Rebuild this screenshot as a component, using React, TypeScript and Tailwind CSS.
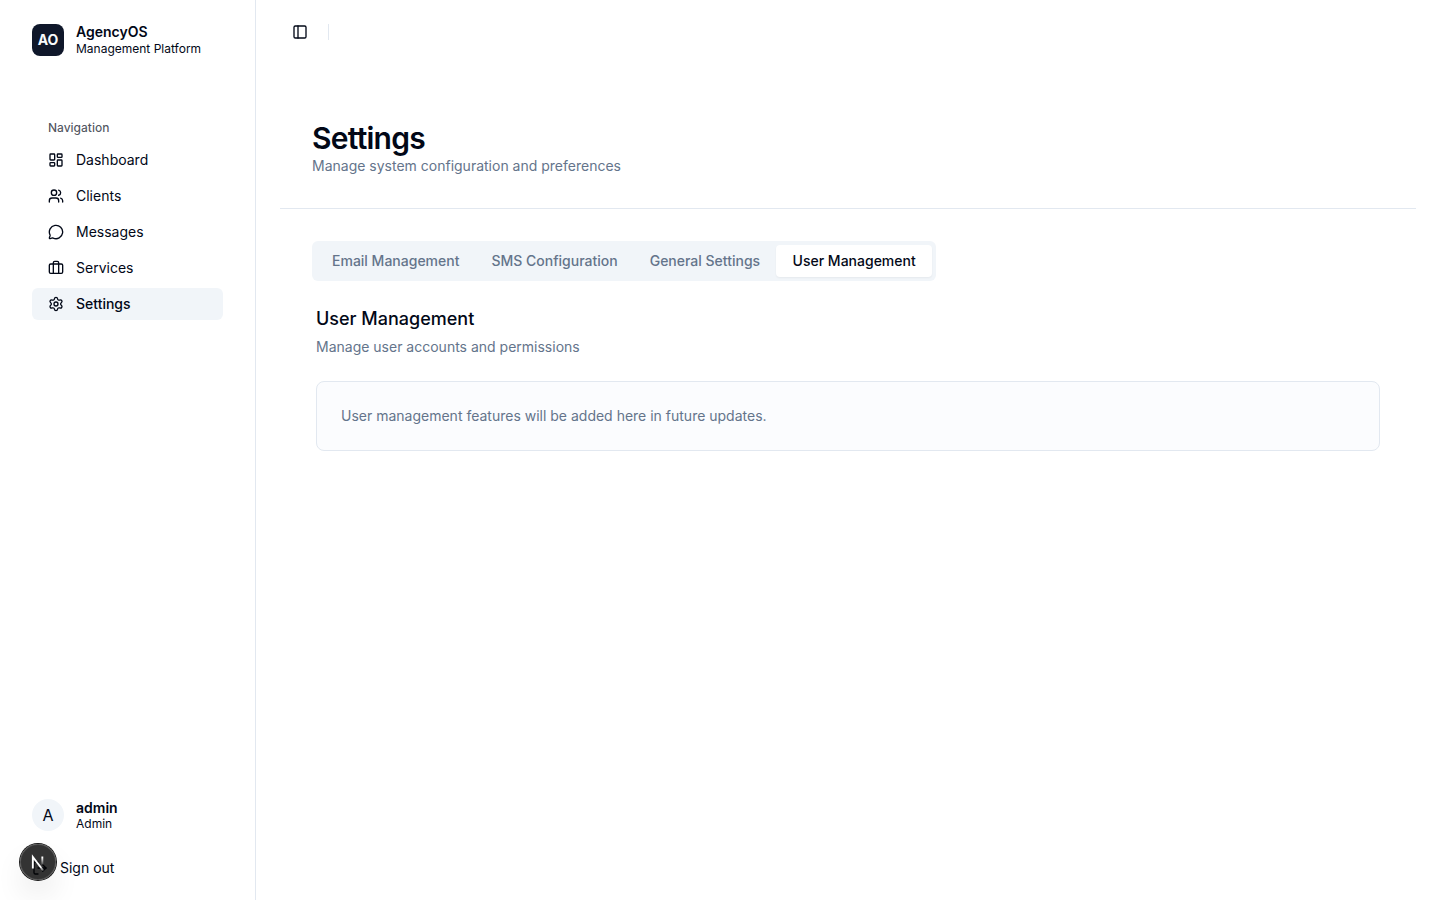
import type { ReactNode } from 'react';
import {
  LayoutDashboard,
  LogOut,
  MessageCircle,
  PanelLeft,
  Settings,
  Users,
} from 'lucide-react';

type IconProps = { className?: string };

function BriefcaseIcon({ className }: IconProps) {
  return (
    <svg
      className={className}
      viewBox="0 0 24 24"
      fill="none"
      stroke="currentColor"
      strokeWidth="2"
      strokeLinecap="round"
      strokeLinejoin="round"
    >
      <rect width="20" height="14" x="2" y="6" rx="2" />
      <path d="M16 20V4a2 2 0 0 0-2-2h-4a2 2 0 0 0-2 2v16" />
    </svg>
  );
}

const navItems: { label: string; icon: React.ComponentType<IconProps>; active?: boolean }[] = [
  { label: 'Dashboard', icon: LayoutDashboard },
  { label: 'Clients', icon: Users },
  { label: 'Messages', icon: MessageCircle },
  { label: 'Services', icon: BriefcaseIcon },
  { label: 'Settings', icon: Settings, active: true },
];

const tabs = ['Email Management', 'SMS Configuration', 'General Settings', 'User Management'];

function Identity({ badge, title, subtitle }: { badge: ReactNode; title: string; subtitle: string }) {
  return (
    <div className="flex items-center gap-3">
      {badge}
      <div className="grid text-sm leading-tight">
        <span className="font-semibold leading-[17.5px]">{title}</span>
        <span className="text-xs leading-4">{subtitle}</span>
      </div>
    </div>
  );
}

function Sidebar() {
  return (
    <aside className="flex w-64 shrink-0 flex-col border-r border-[#e2e8f0]">
      <div className="px-8 pt-[23px]">
        <Identity
          badge={
            <div className="flex size-8 items-center justify-center rounded-lg bg-[#0f172a] text-sm font-bold text-[#f8fafc]">
              AO
            </div>
          }
          title="AgencyOS"
          subtitle="Management Platform"
        />
      </div>
      <nav className="px-8 pt-[55px]">
        <div className="flex h-8 items-center px-4 text-xs font-medium text-[#020817]/70">Navigation</div>
        <ul className="flex flex-col gap-1">
          {navItems.map(({ label, icon: Icon, active }) => (
            <li key={label}>
              <a
                className={
                  active
                    ? 'flex h-8 items-center gap-3 rounded-md bg-[#f1f5f9] px-4 text-sm font-medium'
                    : 'flex h-8 items-center gap-3 rounded-md px-4 text-sm'
                }
              >
                <Icon className="size-4 shrink-0" />
                {label}
              </a>
            </li>
          ))}
        </ul>
      </nav>
      <div className="mt-auto px-8 pb-4">
        <Identity
          badge={
            <div className="flex size-8 items-center justify-center rounded-full bg-[#f1f5f9] text-base">A</div>
          }
          title="admin"
          subtitle="Admin"
        />
        <button className="mt-5 flex h-8 items-center gap-3 text-sm">
          <LogOut className="size-4" />
          Sign out
        </button>
      </div>
    </aside>
  );
}

function DevBadge() {
  return (
    <div className="fixed bottom-5 left-5 size-9 rounded-full bg-black/80 shadow-[0_0_0_1px_#171717,inset_0_0_0_1px_hsla(0,0%,100%,0.14),0_16px_32px_-8px_rgba(0,0,0,0.24)]">
      <svg className="size-9" viewBox="0 0 36 36" fill="none">
        <defs>
          <linearGradient id="diagonal" x1="20.46" y1="23.12" x2="25.98" y2="29.97" gradientUnits="userSpaceOnUse">
            <stop stopColor="white" />
            <stop offset="0.604" stopColor="white" stopOpacity="0" />
            <stop offset="1" stopColor="white" stopOpacity="0" />
          </linearGradient>
          <linearGradient id="stem" x1="22.33" y1="13.4" x2="22.3" y2="21.6" gradientUnits="userSpaceOnUse">
            <stop stopColor="white" />
            <stop offset="1" stopColor="white" stopOpacity="0" />
          </linearGradient>
        </defs>
        <path d="M23.8 27.2L12.84 13V24.6" stroke="url(#diagonal)" strokeWidth="1.86" />
        <path d="M22.33 12.5V24.1" stroke="url(#stem)" strokeWidth="1.86" />
      </svg>
    </div>
  );
}

export default function App() {
  return (
    <div className="flex h-screen bg-white font-['Inter',sans-serif] text-[#020817] antialiased">
      <Sidebar />
      <main className="flex flex-1 flex-col px-6">
        <header className="flex h-16 items-center">
          <button className="flex h-10 w-10 items-center justify-center">
            <PanelLeft className="size-4" />
          </button>
          <div className="ml-2 h-4 w-px bg-[#e2e8f0]" />
        </header>
        <section className="mt-14 border-b border-[#e2e8f0] px-8 pb-8">
          <h1 className="text-3xl leading-9 font-semibold tracking-tight">Settings</h1>
          <p className="text-sm text-[#64748b]">Manage system configuration and preferences</p>
        </section>
        <section className="p-8">
          <div className="inline-flex h-10 items-center rounded-md bg-[#f1f5f9] p-1 text-sm font-medium text-[#64748b]">
            {tabs.map((tab) => (
              <button
                key={tab}
                className={
                  tab === 'User Management'
                    ? 'h-8 w-39 rounded-sm bg-white text-[#020817] shadow-xs'
                    : 'h-8 rounded-sm px-4'
                }
              >
                {tab}
              </button>
            ))}
          </div>
          <div className="px-1 pt-6">
            <h2 className="text-lg font-medium">User Management</h2>
            <p className="mt-1 text-sm text-[#64748b]">Manage user accounts and permissions</p>
            <div className="mt-6 rounded-lg border border-[#e2e8f0] bg-[#fbfcfe] p-6 text-sm text-[#64748b]">
              User management features will be added here in future updates.
            </div>
          </div>
        </section>
      </main>
      <DevBadge />
    </div>
  );
}
